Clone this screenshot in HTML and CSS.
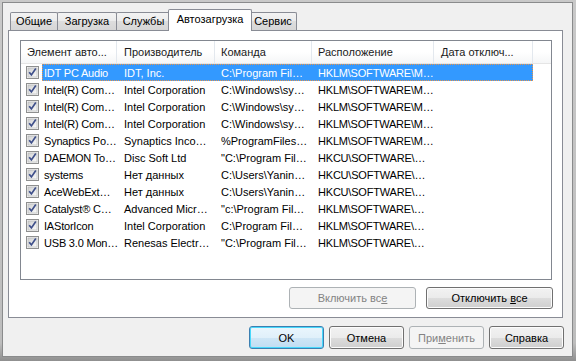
FILE: index.html
```html
<!DOCTYPE html>
<html lang="ru">

<head>
    <meta charset="UTF-8">
    <title>Конфигурация системы</title>
    <link rel="stylesheet" href="styles.css">
</head>

<body>
    <svg class="defs" width="0" height="0">
        <defs>
            <linearGradient id="chkbg" x1="0" y1="0" x2="1" y2="1">
                <stop offset="0" stop-color="#cfd0d1" />
                <stop offset="1" stop-color="#fbfbfb" />
            </linearGradient>
            <symbol id="chk" viewBox="0 0 13 13">
                <rect x="0.5" y="0.5" width="12" height="12" fill="#f4f4f4" stroke="#8e8f8f" />
                <rect x="2" y="2" width="9" height="9" fill="url(#chkbg)" stroke="#b0b1b2" stroke-width="0.6" />
                <path d="M3.2 6.2 L5.4 8.9 L9.8 2.6" fill="none" stroke="#3e4f8a" stroke-width="1.7" />
            </symbol>
        </defs>
    </svg>

    <div class="dialog">
        <!-- Вкладки -->
        <div class="tabs">
            <div class="tab t1">Общие</div>
            <div class="tab t2">Загрузка</div>
            <div class="tab t3">Службы</div>
            <div class="tab active">Автозагрузка</div>
            <div class="tab t5">Сервис</div>
        </div>

        <div class="panel">
            <div class="listview">
                <div class="lv-header">
                    <div class="hcol c1">Элемент авто...</div>
                    <div class="hcol c2">Производитель</div>
                    <div class="hcol c3">Команда</div>
                    <div class="hcol c4">Расположение</div>
                    <div class="hcol c5">Дата отключ...</div>
                </div>
                <div id="rows"></div>
            </div>

            <div class="panel-buttons">
                <button class="btn wide" disabled>Включить вс<u>е</u></button>
                <button class="btn wide">Отключить <u>в</u>се</button>
            </div>
        </div>

        <div class="dialog-buttons">
            <button class="btn default">OK</button>
            <button class="btn">Отмена</button>
            <button class="btn" disabled>При<u>м</u>енить</button>
            <button class="btn">Справка</button>
        </div>
    </div>

    <script>
        // Элементы автозагрузки
        var items = [
            ['IDT PC Audio', 'IDT, Inc.', 'C:\\Program Fil…', 'HKLM\\SOFTWARE\\M…'],
            ['Intel(R) Com…', 'Intel Corporation', 'C:\\Windows\\sy…', 'HKLM\\SOFTWARE\\M…'],
            ['Intel(R) Com…', 'Intel Corporation', 'C:\\Windows\\sy…', 'HKLM\\SOFTWARE\\M…'],
            ['Intel(R) Com…', 'Intel Corporation', 'C:\\Windows\\sy…', 'HKLM\\SOFTWARE\\M…'],
            ['Synaptics Po…', 'Synaptics Inco…', '%ProgramFiles…', 'HKLM\\SOFTWARE\\M…'],
            ['DAEMON To…', 'Disc Soft Ltd', '"C:\\Program Fil…', 'HKCU\\SOFTWARE\\…'],
            ['systems', 'Нет данных', 'C:\\Users\\Yanin…', 'HKCU\\SOFTWARE\\…'],
            ['AceWebExt…', 'Нет данных', 'C:\\Users\\Yanin…', 'HKCU\\SOFTWARE\\…'],
            ['Catalyst® C…', 'Advanced Micr…', '"c:\\Program Fil…', 'HKLM\\SOFTWARE\\…'],
            ['IAStorIcon', 'Intel Corporation', 'C:\\Program Fil…', 'HKLM\\SOFTWARE\\…'],
            ['USB 3.0 Mon…', 'Renesas Electr…', '"C:\\Program Fil…', 'HKLM\\SOFTWARE\\…']
        ];

        var rows = document.getElementById('rows');
        items.forEach(function (item, i) {
            var row = document.createElement('div');
            row.className = 'row';
            var html = '<div class="chk"><svg width="13" height="13"><use href="#chk"/></svg></div>';
            html += '<div class="cells' + (i === 0 ? ' selected' : '') + '">';
            for (var c = 0; c < 5; c++) {
                html += '<div class="cell c' + (c + 1) + '">' + (item[c] || '') + '</div>';
            }
            html += '</div>';
            row.innerHTML = html;
            rows.appendChild(row);
        });
    </script>
</body>

</html>
```

FILE: styles.css
```css
* {
    margin: 0;
    padding: 0;
    box-sizing: border-box;
}

body {
    font-family: 'Liberation Sans', Arial, sans-serif;
    font-size: 11px;
    color: #000;
    width: 576px;
    height: 361px;
    overflow: hidden;
    padding: 2px 0 0 2px;
    background: linear-gradient(to bottom, #c9c9c9 0%, #bdbdbd 95%, #8f8f8f 100%);
}

.defs {
    position: absolute;
}

/* Окно диалога */
.dialog {
    width: 571px;
    height: 355px;
    border: 1px solid #8a8b8c;
    background-color: #f0f0f0;
    display: flex;
    flex-direction: column;
}

/* Вкладки */
.tabs {
    display: flex;
    align-items: flex-end;
    height: 27px;
    padding-left: 7px;
}

.tab {
    height: 18px;
    line-height: 16px;
    text-align: center;
    border: 1px solid #898c95;
    border-bottom: none;
    border-radius: 2px 2px 0 0;
    background: linear-gradient(to bottom, #f3f3f3 0%, #ebebeb 50%, #dddddd 50%, #d6d6d6 100%);
    margin-right: -1px;
    white-space: nowrap;
}

.t1 { width: 48px; }
.t2 { width: 60px; }
.t3 { width: 55px; }
.t5 { width: 48px; }

.tab.active {
    width: 84px;
    height: 22px;
    line-height: 19px;
    margin-left: -2px;
    margin-right: -3px;
    margin-bottom: -1px;
    background: #fff;
    position: relative;
    z-index: 1;
}

/* Панель вкладки */
.panel {
    width: 555px;
    height: 288px;
    margin-left: 5px;
    border: 1px solid #898c95;
    background-color: #fff;
    padding: 9px 0 0 11px;
}

.listview {
    width: 532px;
    height: 240px;
    border: 1px solid #828790;
    background-color: #fff;
}

.lv-header {
    display: flex;
    height: 23px;
    border-bottom: 1px solid #e5e5e5;
    background: linear-gradient(to bottom, #ffffff 0%, #ffffff 50%, #f5f6f7 100%);
}

.hcol {
    line-height: 22px;
    padding-left: 6px;
    border-right: 1px solid #e3e8ee;
    white-space: nowrap;
    overflow: hidden;
    color: #1a1a1a;
}

.hcol.c1 { width: 96px; }
.hcol.c2 { width: 98px; padding-left: 7px; }
.hcol.c3 { width: 97px; }
.hcol.c4 { width: 122px; }
.hcol.c5 { width: 99px; padding-left: 7px; }

.row {
    display: flex;
    height: 17px;
}

.chk {
    width: 21px;
    padding: 2px 0 0 5px;
}

.chk svg {
    display: block;
}

.cells {
    display: flex;
    height: 17px;
}

.cells.selected {
    background-color: #3399ff;
    color: #fff;
    outline: 1px dotted #e9954a;
    outline-offset: -1px;
}

.cell {
    line-height: 16px;
    padding-top: 1px;
    padding-left: 6px;
    white-space: nowrap;
}

.cell.c1 { width: 75px; padding-left: 2px; letter-spacing: -0.2px; }
.cell.c2 { width: 98px; padding-left: 7px; }
.cell.c3 { width: 97px; }
.cell.c4 { width: 122px; letter-spacing: -0.2px; }
.cell.c5 { width: 99px; }

/* Кнопки */
.btn {
    font-family: 'Liberation Sans', Arial, sans-serif;
    font-size: 11px;
    color: #000;
    width: 75px;
    height: 23px;
    border: 1px solid #707070;
    border-radius: 3px;
    box-shadow: inset 0 0 0 1px #fcfcfc;
    background: linear-gradient(to bottom, #f2f2f2 0%, #ebebeb 50%, #dddddd 50%, #cfcfcf 100%);
}

.btn:disabled {
    color: #838383;
    border-color: #adb2b5;
    box-shadow: none;
    background: #f4f4f4;
}

.btn.default {
    border-color: #3c7fb1;
    box-shadow: inset 0 0 0 1px #48d8fb;
    background: linear-gradient(to bottom, #eaf6fd 0%, #e0f0fa 50%, #cfe6f6 50%, #c0ddf2 100%);
}

.btn.wide {
    width: 127px;
    height: 22px;
}

.panel-buttons {
    display: flex;
    gap: 10px;
    margin-top: 7px;
    margin-left: 269px;
}

.dialog-buttons {
    display: flex;
    gap: 5px;
    margin-top: 8px;
    margin-left: 246px;
}
```
